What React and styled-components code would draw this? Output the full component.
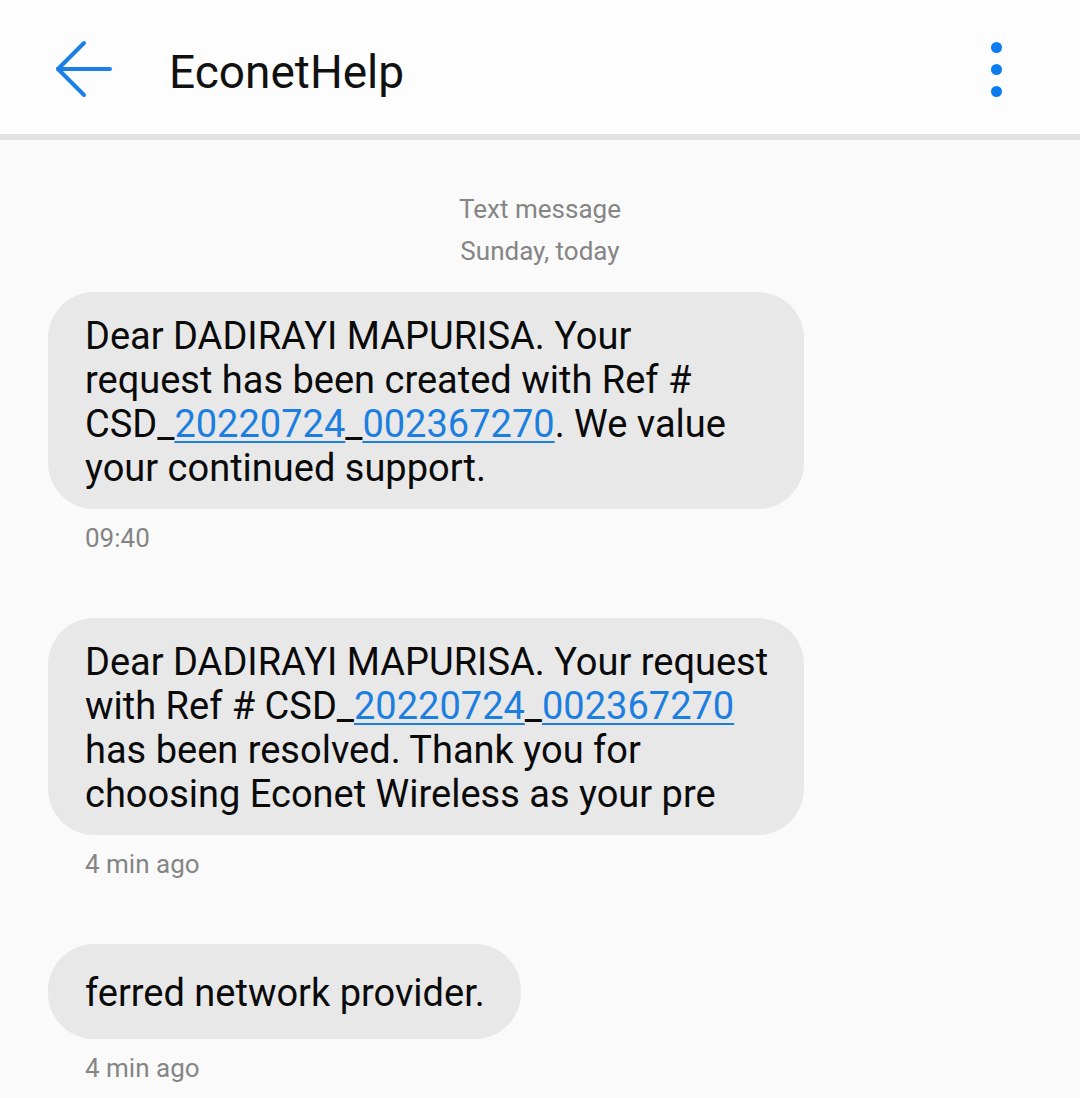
import React from 'react'
import styled, { createGlobalStyle } from 'styled-components'

const Global = createGlobalStyle`
  html, body { margin: 0; padding: 0; background: #fafafa; }
  body { font-family: Roboto, "Noto Sans", "Liberation Sans", sans-serif; }
`

const Page = styled.div`
  width: 1080px;
  height: 1098px;
  overflow: hidden;
  background: #fafafa;
`

const Header = styled.div`
  height: 130px;
  background: #fdfdfd;
  border-bottom: 6px solid #e2e2e2;
  display: flex;
  align-items: center;
  padding: 4px 0 0 55px;
  box-sizing: content-box;
`

const BackBtn = styled.div`
  width: 58px;
  height: 58px;
  display: flex;
  align-items: center;
  justify-content: center;
`

const Title = styled.div`
  margin-left: 56px;
  font-size: 46px;
  color: #111;
  flex: 1;
  padding-top: 6px;
`

const Kebab = styled.div`
  width: 60px;
  margin-right: 54px;
  display: flex;
  flex-direction: column;
  align-items: center;
  gap: 11px;
  span {
    width: 11px;
    height: 11px;
    border-radius: 50%;
    background: #0b7cf0;
  }
`

const Thread = styled.div`
  padding: 48px 0 0 48px;
  display: flex;
  flex-direction: column;
`

const Meta = styled.div`
  align-self: center;
  margin-left: -48px;
  text-align: center;
  font-size: 26px;
  line-height: 42px;
  color: #858585;
  margin-bottom: 20px;
`

const Bubble = styled.div`
  background: #e8e8e8;
  border-radius: 46px;
  box-sizing: border-box;
  width: ${p => (p.$full ? '756px' : 'fit-content')};
  min-height: 95px;
  display: flex;
  flex-direction: column;
  justify-content: center;
  padding: 22px 36px 19px 37px;
  font-size: 38px;
  line-height: 44px;
  color: #0a0a0a;
  white-space: nowrap;
`

const Line = styled.div``

const Ref = styled.span`
  color: #1c7fe0;
  text-decoration: underline;
  text-decoration-thickness: 2px;
  text-underline-offset: 4px;
`

const Stamp = styled.div`
  padding: 13px 0 0 37px;
  font-size: 26px;
  line-height: 32px;
  color: #858585;
  margin-bottom: ${p => p.$gap || 0}px;
`

const Arrow = () => (
  <svg width="58" height="58" viewBox="0 0 58 58" fill="none" stroke="#1a80e6" strokeWidth="4" strokeLinecap="round" strokeLinejoin="round">
    <path d="M3 29 H55" />
    <path d="M29 3 L3 29 L29 55" />
  </svg>
)

const RefNum = () => (
  <>CSD_<Ref>20220724</Ref>_<Ref>002367270</Ref></>
)

export default function App() {
  return (
    <Page>
      <Global />
      <Header>
        <BackBtn><Arrow /></BackBtn>
        <Title>EconetHelp</Title>
        <Kebab><span /><span /><span /></Kebab>
      </Header>
      <Thread>
        <Meta>Text message<br />Sunday, today</Meta>

        <Bubble $full>
          <Line>Dear DADIRAYI MAPURISA. Your</Line>
          <Line>request has been created with Ref #</Line>
          <Line><RefNum />. We value</Line>
          <Line>your continued support.</Line>
        </Bubble>
        <Stamp $gap={64}>09:40</Stamp>

        <Bubble $full>
          <Line>Dear DADIRAYI MAPURISA. Your request</Line>
          <Line>with Ref # <RefNum /></Line>
          <Line>has been resolved. Thank you for</Line>
          <Line>choosing Econet Wireless as your pre</Line>
        </Bubble>
        <Stamp $gap={64}>4 min ago</Stamp>

        <Bubble>
          <Line>ferred network provider.</Line>
        </Bubble>
        <Stamp>4 min ago</Stamp>
      </Thread>
    </Page>
  )
}
